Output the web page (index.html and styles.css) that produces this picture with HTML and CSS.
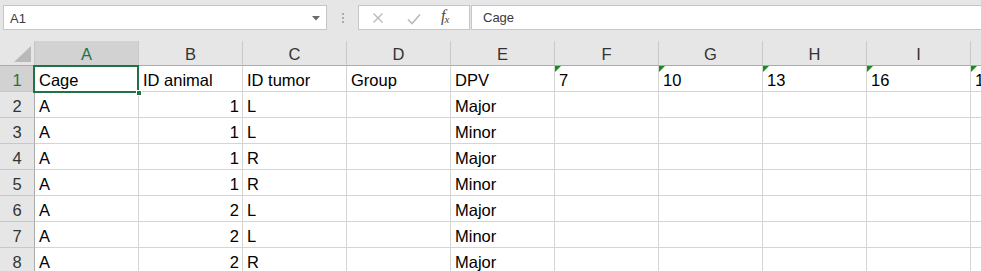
FILE: index.html
```html
<!DOCTYPE html>
<html>
<head>
<meta charset="utf-8">
<link rel="stylesheet" href="styles.css">
</head>
<body>
<div class="app">
  <div class="fbar">
    <div class="namebox">
      <span class="nb-text">A1</span>
      <svg class="nb-arrow" width="8" height="5" viewBox="0 0 8 5"><path d="M0 0H8L4 4.5Z" fill="#6b6b6b"/></svg>
    </div>
    <div class="grip"><i></i><i></i><i></i></div>
    <div class="fxbox">
      <svg class="ico" width="12" height="12" viewBox="0 0 12 12"><path d="M1.5 1.5L10.5 10.5M10.5 1.5L1.5 10.5" stroke="#b9b9b9" stroke-width="1.4" fill="none"/></svg>
      <svg class="ico" width="14" height="12" viewBox="0 0 14 12"><path d="M1 6.5L5 10.5L13 1.5" stroke="#b9b9b9" stroke-width="1.6" fill="none"/></svg>
      <span class="fx"><i>f</i><sub>x</sub></span>
    </div>
    <div class="finput">Cage</div>
  </div>

  <div class="sheet">
    <div class="row hrow">
      <div class="corner"><svg width="17" height="16" viewBox="0 0 17 16"><path d="M17 0V16H0Z" fill="#b9b9b9"/></svg></div>
      <div class="ch sel">A</div>
      <div class="ch">B</div>
      <div class="ch">C</div>
      <div class="ch">D</div>
      <div class="ch">E</div>
      <div class="ch">F</div>
      <div class="ch">G</div>
      <div class="ch">H</div>
      <div class="ch">I</div>
      <div class="ch">J</div>
    </div>

    <div class="row">
      <div class="rh sel">1</div>
      <div class="c">Cage</div>
      <div class="c">ID animal</div>
      <div class="c">ID tumor</div>
      <div class="c">Group</div>
      <div class="c">DPV</div>
      <div class="c tri">7</div>
      <div class="c tri">10</div>
      <div class="c tri">13</div>
      <div class="c tri">16</div>
      <div class="c tri">19</div>
    </div>
    <div class="row">
      <div class="rh">2</div>
      <div class="c">A</div><div class="c num">1</div><div class="c">L</div><div class="c"></div><div class="c">Major</div>
      <div class="c"></div><div class="c"></div><div class="c"></div><div class="c"></div><div class="c"></div>
    </div>
    <div class="row">
      <div class="rh">3</div>
      <div class="c">A</div><div class="c num">1</div><div class="c">L</div><div class="c"></div><div class="c">Minor</div>
      <div class="c"></div><div class="c"></div><div class="c"></div><div class="c"></div><div class="c"></div>
    </div>
    <div class="row">
      <div class="rh">4</div>
      <div class="c">A</div><div class="c num">1</div><div class="c">R</div><div class="c"></div><div class="c">Major</div>
      <div class="c"></div><div class="c"></div><div class="c"></div><div class="c"></div><div class="c"></div>
    </div>
    <div class="row">
      <div class="rh">5</div>
      <div class="c">A</div><div class="c num">1</div><div class="c">R</div><div class="c"></div><div class="c">Minor</div>
      <div class="c"></div><div class="c"></div><div class="c"></div><div class="c"></div><div class="c"></div>
    </div>
    <div class="row">
      <div class="rh">6</div>
      <div class="c">A</div><div class="c num">2</div><div class="c">L</div><div class="c"></div><div class="c">Major</div>
      <div class="c"></div><div class="c"></div><div class="c"></div><div class="c"></div><div class="c"></div>
    </div>
    <div class="row">
      <div class="rh">7</div>
      <div class="c">A</div><div class="c num">2</div><div class="c">L</div><div class="c"></div><div class="c">Minor</div>
      <div class="c"></div><div class="c"></div><div class="c"></div><div class="c"></div><div class="c"></div>
    </div>
    <div class="row">
      <div class="rh">8</div>
      <div class="c">A</div><div class="c num">2</div><div class="c">R</div><div class="c"></div><div class="c">Major</div>
      <div class="c"></div><div class="c"></div><div class="c"></div><div class="c"></div><div class="c"></div>
    </div>

    <div class="selbox"><span class="handle"></span></div>
  </div>
</div>
</body>
</html>
```

FILE: styles.css
```css
* { box-sizing: border-box; }
html, body {
  margin: 0;
  padding: 0;
  width: 981px;
  height: 271px;
  overflow: hidden;
  background: #e6e6e6;
}
.app {
  width: 981px;
  font-family: "Liberation Sans", Arial, sans-serif;
}

/* formula bar */
.fbar {
  height: 41px;
  padding: 5px 0 0 3px;
  display: flex;
  align-items: flex-start;
}
.namebox {
  width: 324px;
  height: 25px;
  background: #fff;
  border: 1px solid #c6c6c6;
  display: flex;
  align-items: center;
  justify-content: space-between;
  padding: 0 6px 0 6px;
  font-size: 13px;
  color: #3a3a3a;
}
.nb-text { padding-top: 1px; }
.nb-arrow { margin-top: 1px; }
.grip {
  width: 31px;
  height: 25px;
  display: flex;
  flex-direction: column;
  align-items: center;
  justify-content: center;
  gap: 2px;
}
.grip i {
  display: block;
  width: 2px;
  height: 2px;
  background: #ababab;
}
.fxbox {
  width: 112px;
  height: 25px;
  background: #fff;
  border: 1px solid #c6c6c6;
  display: flex;
  align-items: center;
  padding-left: 13px;
}
.fxbox .ico:nth-child(1) { margin-right: 23px; }
.fxbox .ico:nth-child(2) { margin-right: 20px; margin-top: 2px; }
.fx {
  font-family: "Liberation Serif", "Times New Roman", serif;
  font-style: italic;
  font-size: 16px;
  color: #4a4a4a;
  line-height: 1;
  margin-top: -2px;
}
.fx i { font-style: italic; }
.fx sub { font-size: 11px; vertical-align: -2px; margin-left: -1px; }
.finput {
  flex: 1;
  margin-left: 1px;
  height: 25px;
  background: #fff;
  border: 1px solid #c6c6c6;
  border-right: none;
  font-size: 13px;
  color: #3a3a3a;
  padding: 4px 0 0 11px;
}

/* sheet */
.sheet {
  position: relative;
  width: 1075px;
  background: #fff;
}
.row {
  display: flex;
  height: 26px;
}
.hrow {
  height: 25px;
  background: #e6e6e6;
}
.corner {
  width: 35px;
  height: 25px;
  border-right: 1px solid #c6c6c6;
  border-bottom: 1px solid #ababab;
  display: flex;
  align-items: flex-end;
  justify-content: flex-end;
  padding: 0 3px 3px 0;
}
.corner svg { display: block; }
.ch {
  width: 104px;
  height: 25px;
  border-right: 1px solid #c8c8c8;
  border-bottom: 1px solid #ababab;
  font-size: 16.5px;
  color: #333;
  text-align: center;
  line-height: 20px;
  padding-top: 3px;
}
.ch.sel {
  background: #d2d2d2;
  color: #217346;
}
.rh {
  width: 35px;
  height: 26px;
  background: #e6e6e6;
  border-right: 1px solid #ababab;
  border-bottom: 1px solid #c8c8c8;
  font-size: 16.5px;
  color: #333;
  text-align: center;
  line-height: 20px;
  padding-top: 4px;
}
.rh.sel {
  background: #d2d2d2;
  color: #217346;
}
.c {
  position: relative;
  width: 104px;
  height: 26px;
  border-right: 1px solid #d4d4d4;
  border-bottom: 1px solid #d4d4d4;
  font-size: 16.5px;
  color: #000;
  line-height: 20px;
  padding: 4px 3px 0 4px;
  white-space: nowrap;
}
.c.num { text-align: right; }
.c.tri::before {
  content: "";
  position: absolute;
  left: 0;
  top: 0;
  border-top: 6px solid #1f8a1f;
  border-right: 6px solid transparent;
}
.selbox {
  position: absolute;
  left: 33px;
  top: 24px;
  width: 106px;
  height: 28px;
  border: 2px solid #217346;
  pointer-events: none;
}
.handle {
  position: absolute;
  right: -5px;
  bottom: -5px;
  width: 6px;
  height: 6px;
  background: #217346;
  border: 1px solid #fff;
}
```
